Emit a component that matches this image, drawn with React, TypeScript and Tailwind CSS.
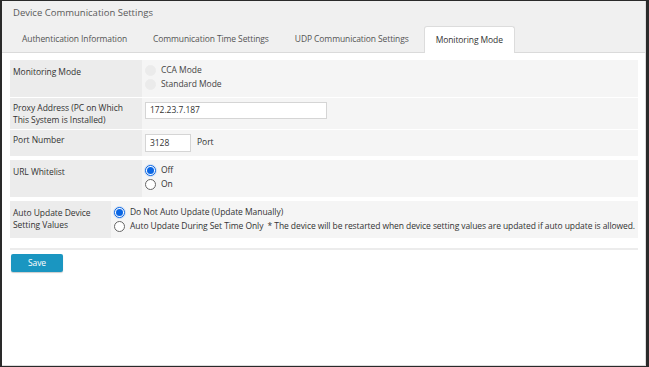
import React from "react";

function Radio({ checked, disabled }: { checked?: boolean; disabled?: boolean }) {
  if (disabled) {
    return (
      <span className="inline-block w-[11px] h-[11px] rounded-full bg-[#ebebeb] border border-[#ececec] shrink-0" />
    );
  }
  if (checked) {
    return (
      <span className="inline-flex items-center justify-center w-[11px] h-[11px] rounded-full border border-[#0a66e4] bg-white shrink-0 shadow-[0_0_0_1px_rgba(10,102,228,0.15)]">
        <span className="block w-[7px] h-[7px] rounded-full bg-[#0a66e4]" />
      </span>
    );
  }
  return <span className="inline-block w-[11px] h-[11px] rounded-full border border-[#666] bg-white shrink-0" />;
}

export default function App() {
  const font = { fontFamily: '"Open Sans", "Noto Sans", sans-serif' };
  return (
    <div className="w-[649px] h-[367px] bg-[#2a2a2a] pl-[2px] pt-[1px] pr-[3px] pb-[1px]" style={font}>
      <div className="w-full h-full bg-white border-r border-b border-[#dcdcdc] flex flex-col">
        {/* Header */}
        <div className="bg-[#f0f0f0] border-b border-[#dadada] h-[52px] flex flex-col">
          <div className="h-[25px] pl-[11px] pt-[5px] text-[9.5px] leading-[14px] text-[#5a5a5a]">
            Device Communication Settings
          </div>
          <div className="flex items-end h-[26px] pl-[7px] text-[8.5px] tracking-[-0.1px] text-[#555]">
            <div className="h-[26px] px-[13px] flex items-center">Authentication Information</div>
            <div className="h-[26px] px-[13px] flex items-center">Communication Time Settings</div>
            <div className="h-[26px] px-[13px] flex items-center">UDP Communication Settings</div>
            <div className="h-[27px] -mb-px px-[11px] flex items-center bg-white border border-b-0 border-[#dcdcdc] rounded-t-[3px] text-[#333] ml-[2px]">
              Monitoring Mode
            </div>
          </div>
        </div>

        {/* Content */}
        <div className="px-[8px] pt-[7px] text-[8.5px] tracking-[-0.05px] text-[#333]">
          <div className="flex flex-col gap-[1px] w-[628px]">
            <div className="flex h-[37px]">
              <div className="w-[132px] shrink-0 bg-[#ececec] pl-[3px] pt-[6px] leading-[12px]">Monitoring Mode</div>
              <div className="flex-1 bg-[#f5f5f5] pl-[3px] pt-[5px] flex flex-col gap-[3px]">
                <div className="flex items-center gap-[5px] h-[11px] text-[#444]"><Radio disabled />CCA Mode</div>
                <div className="flex items-center gap-[5px] h-[11px] text-[#444]"><Radio disabled />Standard Mode</div>
              </div>
            </div>
            <div className="flex h-[31px]">
              <div className="w-[132px] shrink-0 bg-[#ececec] pl-[3px] pt-[4px] leading-[12px]">
                Proxy Address (PC on Which
                <br />
                This System is Installed)
              </div>
              <div className="flex-1 bg-[#f5f5f5] pl-[3px] pt-[4px]">
                <div className="w-[182px] h-[17px] bg-white border border-[#d5d5d5] flex items-center pl-[4px]">172.23.7.187</div>
              </div>
            </div>
            <div className="flex h-[26px]">
              <div className="w-[132px] shrink-0 bg-[#ececec] pl-[3px] pt-[4px] leading-[12px]">Port Number</div>
              <div className="flex-1 bg-[#f5f5f5] pl-[3px] pt-[4px] flex items-start gap-[6px]">
                <div className="w-[46px] h-[18px] bg-white border border-[#d5d5d5] flex items-center pl-[4px]">3128</div>
                <div className="pt-[2px] leading-[12px]">Port</div>
              </div>
            </div>
            <div className="flex h-[37px] mt-[3px]">
              <div className="w-[132px] shrink-0 bg-[#ececec] pl-[3px] pt-[6px] leading-[12px]">URL Whitelist</div>
              <div className="flex-1 bg-[#f5f5f5] pl-[3px] pt-[5px] flex flex-col gap-[3px]">
                <div className="flex items-center gap-[5px] h-[11px]"><Radio checked />Off</div>
                <div className="flex items-center gap-[5px] h-[11px]"><Radio />On</div>
              </div>
            </div>
            <div className="flex h-[37px] mt-[3px]">
              <div className="w-[101px] shrink-0 bg-[#ececec] pl-[3px] pt-[6px] leading-[12px]">
                Auto Update Device
                <br />
                Setting Values
              </div>
              <div className="flex-1 min-w-0 bg-[#f5f5f5] pl-[3px] pt-[6px] flex flex-col gap-[3px]">
                <div className="flex items-center gap-[5px] h-[11px]"><Radio checked />Do Not Auto Update (Update Manually)</div>
                <div className="flex items-center gap-[5px] h-[11px] whitespace-nowrap tracking-[-0.08px]">
                  <Radio />Auto Update During Set Time Only&nbsp;&nbsp;* The device will be restarted when device setting values are updated if auto update is allowed.
                </div>
              </div>
            </div>
          </div>
          <div className="w-[628px] h-[2px] bg-[#ececec] mt-[10px]" />
          <button className="mt-[4px] ml-[1px] w-[52px] h-[18px] bg-[#1a96c1] text-white text-[8.5px] rounded-[2px] flex items-center justify-center shadow-[0_1px_1px_rgba(0,0,0,0.2)]">
            Save
          </button>
        </div>
      </div>
    </div>
  );
}
